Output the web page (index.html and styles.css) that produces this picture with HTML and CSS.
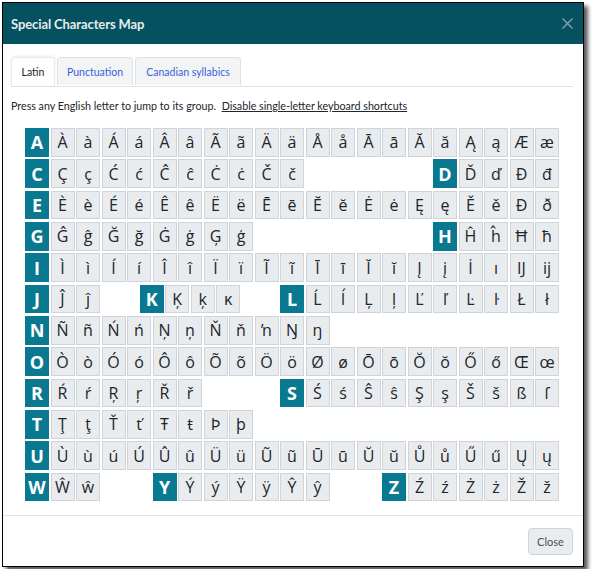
FILE: index.html
```html
<!DOCTYPE html>
<html lang="en">
<head>
    <meta charset="UTF-8">
    <meta name="viewport" content="width=device-width, initial-scale=1.0">
    <title>Special Characters Map</title>
    <link rel="stylesheet" href="styles.css">
</head>
<body>
    <div class="dialog">
        <div class="dialog-header">
            <h1>Special Characters Map</h1>
            <svg class="close-x" width="11" height="11" viewBox="0 0 11 11"><path d="M0.5 0.5L10.5 10.5M10.5 0.5L0.5 10.5" fill="none" stroke="currentColor" stroke-width="1.3"/></svg>
        </div>

        <div class="dialog-body">
            <div class="tabs">
                <a class="tab active">Latin</a>
                <a class="tab">Punctuation</a>
                <a class="tab">Canadian syllabics</a>
            </div>

            <p class="hint">Press any English letter to jump to its group. <a class="hint-link">Disable single-letter keyboard shortcuts</a></p>

            <div class="map">
                <div class="row"><b>A</b><span>À</span><span>à</span><span>Á</span><span>á</span><span>Â</span><span>â</span><span>Ã</span><span>ã</span><span>Ä</span><span>ä</span><span>Å</span><span>å</span><span>Ā</span><span>ā</span><span>Ă</span><span>ă</span><span>Ą</span><span>ą</span><span>Æ</span><span>æ</span></div>
                <div class="row"><b>C</b><span>Ç</span><span>ç</span><span>Ć</span><span>ć</span><span>Ĉ</span><span>ĉ</span><span>Ċ</span><span>ċ</span><span>Č</span><span>č</span><i class="skip-5"></i><b>D</b><span>Ď</span><span>ď</span><span>Đ</span><span>đ</span></div>
                <div class="row"><b>E</b><span>È</span><span>è</span><span>É</span><span>é</span><span>Ê</span><span>ê</span><span>Ë</span><span>ë</span><span>Ē</span><span>ē</span><span>Ĕ</span><span>ĕ</span><span>Ė</span><span>ė</span><span>Ę</span><span>ę</span><span>Ě</span><span>ě</span><span>Ð</span><span>ð</span></div>
                <div class="row"><b>G</b><span>Ĝ</span><span>ĝ</span><span>Ğ</span><span>ğ</span><span>Ġ</span><span>ġ</span><span>Ģ</span><span>ģ</span><i class="skip-7"></i><b>H</b><span>Ĥ</span><span>ĥ</span><span>Ħ</span><span>ħ</span></div>
                <div class="row"><b>I</b><span>Ì</span><span>ì</span><span>Í</span><span>í</span><span>Î</span><span>î</span><span>Ï</span><span>ï</span><span>Ĩ</span><span>ĩ</span><span>Ī</span><span>ī</span><span>Ĭ</span><span>ĭ</span><span>Į</span><span>į</span><span>İ</span><span>ı</span><span>Ĳ</span><span>ĳ</span></div>
                <div class="row"><b>J</b><span>Ĵ</span><span>ĵ</span><i class="skip-1h"></i><b>K</b><span>Ķ</span><span>ķ</span><span>ĸ</span><i class="skip-1h"></i><b>L</b><span>Ĺ</span><span>ĺ</span><span>Ļ</span><span>ļ</span><span>Ľ</span><span>ľ</span><span>Ŀ</span><span>ŀ</span><span>Ł</span><span>ł</span></div>
                <div class="row"><b>N</b><span>Ñ</span><span>ñ</span><span>Ń</span><span>ń</span><span>Ņ</span><span>ņ</span><span>Ň</span><span>ň</span><span>ŉ</span><span>Ŋ</span><span>ŋ</span></div>
                <div class="row"><b>O</b><span>Ò</span><span>ò</span><span>Ó</span><span>ó</span><span>Ô</span><span>ô</span><span>Õ</span><span>õ</span><span>Ö</span><span>ö</span><span>Ø</span><span>ø</span><span>Ō</span><span>ō</span><span>Ŏ</span><span>ŏ</span><span>Ő</span><span>ő</span><span>Œ</span><span>œ</span></div>
                <div class="row"><b>R</b><span>Ŕ</span><span>ŕ</span><span>Ŗ</span><span>ŗ</span><span>Ř</span><span>ř</span><i class="skip-3"></i><b>S</b><span>Ś</span><span>ś</span><span>Ŝ</span><span>ŝ</span><span>Ş</span><span>ş</span><span>Š</span><span>š</span><span>ß</span><span>ſ</span></div>
                <div class="row"><b>T</b><span>Ţ</span><span>ţ</span><span>Ť</span><span>ť</span><span>Ŧ</span><span>ŧ</span><span>Þ</span><span>þ</span></div>
                <div class="row"><b>U</b><span>Ù</span><span>ù</span><span>ú</span><span>Ú</span><span>Û</span><span>û</span><span>Ü</span><span>ü</span><span>Ũ</span><span>ũ</span><span>Ū</span><span>ū</span><span>Ŭ</span><span>ŭ</span><span>Ů</span><span>ů</span><span>Ű</span><span>ű</span><span>Ų</span><span>ų</span></div>
                <div class="row"><b>W</b><span>Ŵ</span><span>ŵ</span><i class="skip-2"></i><b>Y</b><span>Ý</span><span>ý</span><span>Ÿ</span><span>ÿ</span><span>Ŷ</span><span>ŷ</span><i class="skip-2"></i><b>Z</b><span>Ź</span><span>ź</span><span>Ż</span><span>ż</span><span>Ž</span><span>ž</span></div>
            </div>
        </div>

        <div class="dialog-footer">
            <button class="btn-close">Close</button>
        </div>
    </div>
</body>
</html>
```
FILE: styles.css
```css
body {
    font-family: Lato, "Open Sans", sans-serif;
    margin: 0;
    padding: 2px;
    background-color: #ffffff;
    color: #212529;
}
.dialog {
    width: 580px;
    border: 1px solid #000000;
    background: #ffffff;
    box-shadow: 4px 4px 4px rgba(0, 0, 0, 0.65);
}
.dialog-header {
    height: 41px;
    display: flex;
    align-items: center;
    justify-content: space-between;
    padding: 0 10px 0 8px;
    background-color: #055160;
    color: #ffffff;
}
.dialog-header h1 {
    margin: 0;
    font-size: 13px;
    font-weight: 700;
    letter-spacing: -0.1px;
    color: #e4eced;
}
.close-x {
    color: #86a8af;
}
.dialog-body {
    padding: 13px 10px 0 8px;
}
.tabs {
    display: flex;
    gap: 2px;
    height: 29px;
    border-bottom: 1px solid #dee2e6;
}
.tab {
    height: 28px;
    box-sizing: border-box;
    display: flex;
    align-items: center;
    justify-content: center;
    font-size: 10.5px;
    color: #3763d8;
    background: #f3f4f6;
    border: 1px solid #dee2e6;
    border-bottom: none;
    border-radius: 4px 4px 0 0;
}
.tab:nth-child(1) {
    width: 44px;
}
.tab:nth-child(2) {
    width: 76px;
}
.tab:nth-child(3) {
    width: 106px;
}
.tab.active {
    height: 29px;
    color: #212529;
    background: #ffffff;
    border-color: #e9ecef;
    box-shadow: 0 -1px 3px rgba(0, 0, 0, 0.08);
}
.hint {
    margin: 11px 0 14px;
    font-size: 10.7px;
    line-height: 16px;
    white-space: nowrap;
}
.hint-link {
    margin-left: 3px;
    text-decoration: underline;
}
.map {
    margin-left: 14px;
}
.row {
    display: flex;
    height: 28.6px;
    margin-bottom: 2.76px;
}
.row b, .row span {
    flex: 0 0 24px;
    box-sizing: border-box;
    margin-right: 1.5px;
    display: flex;
    align-items: center;
    justify-content: center;
    font-family: "Open Sans", sans-serif;
}
.row b {
    background-color: #087990;
    color: #ffffff;
    font-size: 18px;
    font-weight: 700;
}
.row span {
    background-color: #e9ecef;
    border: 1px solid #ced4da;
    font-size: 16px;
}
.skip-1h {
    flex: 0 0 38.25px;
}
.skip-2 {
    flex: 0 0 51px;
}
.skip-3 {
    flex: 0 0 76.5px;
}
.skip-5 {
    flex: 0 0 127.5px;
}
.skip-7 {
    flex: 0 0 178.5px;
}
.dialog-footer {
    margin-top: 14px;
    height: 50px;
    border-top: 1px solid #dee2e6;
    display: flex;
    align-items: center;
    justify-content: flex-end;
    padding-right: 10px;
}
.btn-close {
    width: 45px;
    height: 27px;
    padding: 0;
    font-family: inherit;
    font-size: 11px;
    color: #495057;
    background: #e9ecef;
    border: 1px solid #ced4da;
    border-radius: 4px;
}
```
